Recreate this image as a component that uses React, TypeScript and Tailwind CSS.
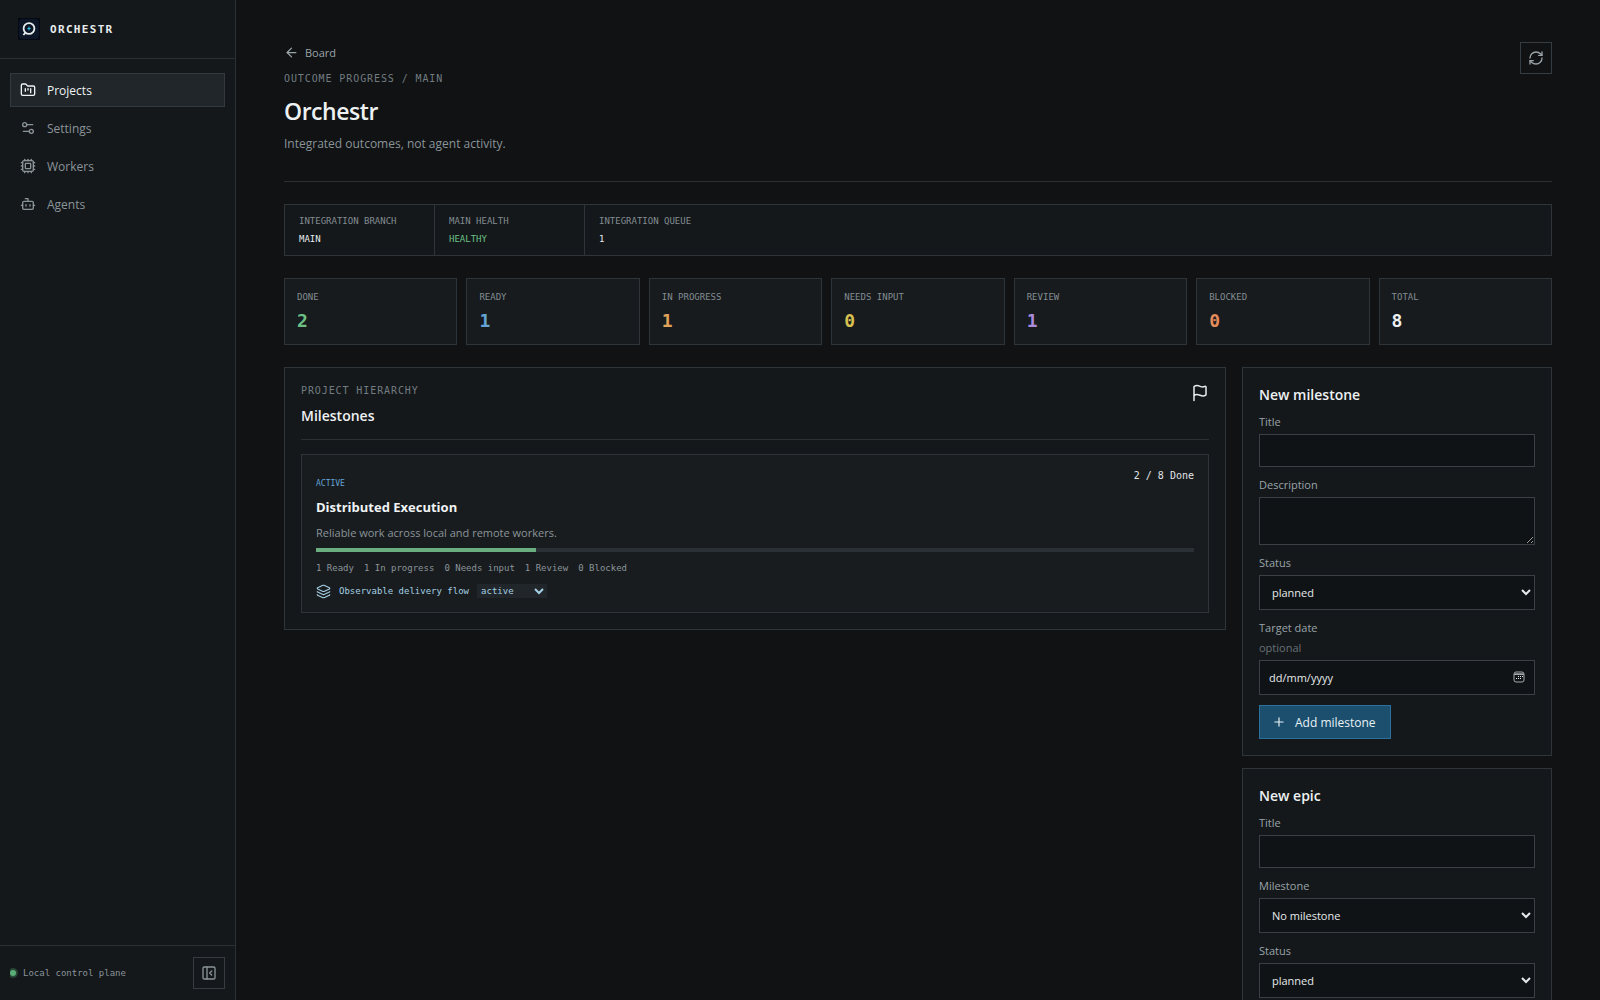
import { useId, type ReactNode } from "react"
import {
  ArrowLeft,
  Bot,
  Cpu,
  Flag,
  FolderKanban,
  Layers,
  PanelLeftClose,
  Plus,
  RefreshCw,
  Settings2,
} from "lucide-react"

const navItems = [
  { label: "Projects", icon: FolderKanban, active: true },
  { label: "Settings", icon: Settings2, active: false },
  { label: "Workers", icon: Cpu, active: false },
  { label: "Agents", icon: Bot, active: false },
]

const health = [
  { label: "Integration branch", value: "main", color: "text-[#e8ecee]" },
  { label: "Main health", value: "healthy", color: "text-[#6cc085]" },
  { label: "Integration queue", value: "1", color: "text-[#e8ecee]" },
]

const stats = [
  { label: "Done", value: 2, color: "text-[#6cc085]" },
  { label: "Ready", value: 1, color: "text-[#64a5d6]" },
  { label: "In progress", value: 1, color: "text-[#e0a458]" },
  { label: "Needs input", value: 0, color: "text-[#d8c04f]" },
  { label: "Review", value: 1, color: "text-[#ab8bdc]" },
  { label: "Blocked", value: 0, color: "text-[#e58b5b]" },
  { label: "Total", value: 8, color: "text-[#eef1f2]" },
]

const milestone = {
  status: "active",
  title: "Distributed Execution",
  description: "Reliable work across local and remote workers.",
  done: 2,
  total: 8,
  counts: ["1 Ready", "1 In progress", "0 Needs input", "1 Review", "0 Blocked"],
  epic: { title: "Observable delivery flow", status: "active" },
}

const statuses = ["planned", "active", "completed"]

const controlClass =
  "w-full border border-[#3a4146] bg-[#0f1315] text-[11px] text-[#e6eaec] outline-none focus:border-[#4a90bd]"

function Logo() {
  return (
    <svg className="size-[22px] shrink-0" viewBox="0 0 22 22" fill="none" aria-hidden="true">
      <rect width="22" height="22" fill="#050914" />
      <rect x="1" y="1" width="20" height="20" rx="4" fill="#0c1626" />
      <circle cx="11" cy="10.5" r="5.4" stroke="#e9edf0" strokeWidth="1.8" />
      <path d="M7.4 14.6 5.4 17" stroke="#e9edf0" strokeWidth="1.8" />
      <path d="M11 8.5v4M9 10.5h4" stroke="#1c7f9c" strokeWidth="1.2" />
      <circle cx="11" cy="10.5" r="1" fill="#35c5e6" />
    </svg>
  )
}

function CalendarIcon() {
  return (
    <svg className="size-3" viewBox="0 0 12 12" fill="none" aria-hidden="true">
      <rect x="1" y="1" width="10" height="10" rx="2" stroke="#a3a8ab" />
      <path d="M1 2.5h10" stroke="#777c7f" />
      <path d="M1 3.5h10" stroke="#a3a8ab" />
      <path d="M5 5.5h1M7 5.5h1M9 5.5h1M3 7.5h1M5 7.5h1M7 7.5h1" stroke="#e6eaec" />
    </svg>
  )
}

function Sidebar() {
  return (
    <aside className="flex w-[236px] shrink-0 flex-col border-r border-[#2a2f33] bg-[#14181b]">
      <div className="flex h-[59px] shrink-0 items-center gap-[10px] border-b border-[#2a2f33] px-[18px]">
        <Logo />
        <span className="pt-[2px] font-[DejaVu_Sans_Mono,monospace] text-[11px] font-bold tracking-[0.12em] text-[#e8ecee]">
          ORCHESTR
        </span>
      </div>

      <nav className="flex flex-1 flex-col gap-1 px-[10px] pt-[14px]">
        {navItems.map(({ label, icon: Icon, active }) => (
          <a
            key={label}
            href="#"
            className={`flex h-[34px] items-center gap-[10px] border px-[9px] text-[12px] ${
              active
                ? "border-[#333a3f] bg-[#20262a] text-[#f0f3f4]"
                : "border-transparent text-[#8b9499]"
            }`}
          >
            <Icon size={16} />
            <span className="pt-[2px] pl-px">{label}</span>
          </a>
        ))}
      </nav>

      <div className="flex items-center justify-between border-t border-[#2a2f33] px-[10px] py-[11px]">
        <div className="flex items-center gap-[7px] overflow-hidden py-1 font-[DejaVu_Sans_Mono,monospace] text-[9px] text-[#8b9499]">
          <span className="size-[6px] rounded-full bg-[#5aae78] ring-2 ring-[#5aae78]/30" />
          <span className="pt-px">Local control plane</span>
        </div>
        <button
          type="button"
          aria-label="Collapse sidebar"
          className="flex size-8 items-center justify-center border border-[#363d42] text-[#8b9499]"
        >
          <PanelLeftClose size={16} />
        </button>
      </div>
    </aside>
  )
}

function Field({ label, hint, children }: { label: string; hint?: string; children: (id: string) => ReactNode }) {
  const id = useId()
  return (
    <div className="flex flex-col gap-[5px]">
      <label htmlFor={id} className="text-[11px] leading-[15px] text-[#9aa3a8]">
        {label}
      </label>
      {hint && <span className="text-[11px] leading-[15px] text-[#697176]">{hint}</span>}
      {children(id)}
    </div>
  )
}

function SelectField({ label, options }: { label: string; options: string[] }) {
  return (
    <Field label={label}>
      {(id) => (
        <select id={id} className={`${controlClass} h-[35px] px-2`}>
          {options.map((option) => (
            <option key={option}>{option}</option>
          ))}
        </select>
      )}
    </Field>
  )
}

function FormPanel({ title, children }: { title: string; children: ReactNode }) {
  return (
    <form className="flex flex-col gap-2 border border-[#2e353a] bg-[#14181b] p-4">
      <h2 className="text-[14px] leading-[22px] font-semibold text-[#eef1f2]">{title}</h2>
      <div className="flex flex-col gap-[10px]">{children}</div>
    </form>
  )
}

function MilestoneCard() {
  const percent = (milestone.done / milestone.total) * 100
  return (
    <article className="border border-[#2e353a] bg-[#181c1f] p-[14px]">
      <div className="flex items-start justify-between">
        <div className="pt-2">
          <p className="font-[DejaVu_Sans_Mono,monospace] text-[8px] leading-[14px] text-[#64a5d6] uppercase">
            {milestone.status}
          </p>
          <h3 className="mt-[6px] text-[13px] leading-5 font-bold text-[#f0f3f4]">{milestone.title}</h3>
          <p className="mt-[7px] text-[11px] leading-[18px] text-[#8b9499]">{milestone.description}</p>
        </div>
        <span className="font-[DejaVu_Sans_Mono,monospace] text-[10px] leading-[14px] text-[#e0e5e7]">
          {milestone.done} / {milestone.total} Done
        </span>
      </div>

      <div className="mt-[6px] h-1 bg-[#2a3035]">
        <div className="h-full bg-[#6aae80]" style={{ width: `${percent}%` }} />
      </div>

      <div className="mt-[10px] flex gap-[10px] font-[DejaVu_Sans_Mono,monospace] text-[9px] leading-3 text-[#8b9499]">
        {milestone.counts.map((count) => (
          <span key={count}>{count}</span>
        ))}
      </div>

      <div className="mt-[10px] flex h-[14px] items-center font-[DejaVu_Sans_Mono,monospace] text-[9px] text-[#a5cfe3]">
        <Layers size={15} strokeWidth={1.8} className="mr-2" />
        <label htmlFor="epic-status" className="pt-px">{milestone.epic.title}</label>
        <select
          id="epic-status"
          defaultValue={milestone.epic.status}
          className="ml-2 h-[14px] w-[70px] bg-[#20262a] outline-none"
        >
          {statuses.map((status) => (
            <option key={status}>{status}</option>
          ))}
        </select>
      </div>
    </article>
  )
}

export default function App() {
  return (
    <div className="flex h-screen overflow-hidden bg-[#101214] font-[Open_Sans,sans-serif] text-[#e8ecee] scheme-dark">
      <Sidebar />

      <main className="min-w-0 flex-1 overflow-y-auto px-12 pt-[42px] pb-12 [scrollbar-width:none]">
        {/* Page header */}
        <header className="flex items-start justify-between border-b border-[#2a2f33] pb-[27px]">
          <div>
            <a href="#" className="flex h-5 items-center gap-[6px] text-[11px] text-[#9aa3a8]">
              <ArrowLeft size={15} />
              <span className="pt-[2px]">Board</span>
            </a>
            <p className="mt-[10px] font-[DejaVu_Sans_Mono,monospace] text-[10px] leading-[13px] tracking-[0.09em] text-[#737c81] uppercase">
              Outcome progress / main
            </p>
            <h1 className="mt-[10px] text-[23px] leading-8 font-semibold tracking-[-0.02em] text-[#eef1f2]">Orchestr</h1>
            <p className="mt-[7px] text-[12px] leading-5 text-[#8b9499]">Integrated outcomes, not agent activity.</p>
          </div>
          <button
            type="button"
            aria-label="Refresh"
            className="flex size-8 items-center justify-center border border-[#363d42] text-[#9aa3a8]"
          >
            <RefreshCw size={16} />
          </button>
        </header>

        {/* Integration health */}
        <dl className="mt-[22px] flex h-[52px] border border-[#2e353a] bg-[#14181b] font-[DejaVu_Sans_Mono,monospace] text-[9px] leading-3 uppercase">
          {health.map((item) => (
            <div key={item.label} className="w-[150px] border-r border-[#2e353a] px-[14px] pt-[10px] last:w-auto last:border-r-0">
              <dt className="text-[#838c91]">{item.label}</dt>
              <dd className={`mt-[6px] ${item.color}`}>{item.value}</dd>
            </div>
          ))}
        </dl>

        {/* Task counters */}
        <dl className="mt-[22px] grid grid-cols-7 gap-[9px] font-[DejaVu_Sans_Mono,monospace]">
          {stats.map((stat) => (
            <div key={stat.label} className="h-[67px] border border-[#2e353a] bg-[#171b1e] px-3 pt-3">
              <dt className="text-[9px] leading-3 text-[#838c91] uppercase">{stat.label}</dt>
              <dd className={`mt-[6px] text-[18px] leading-6 font-bold ${stat.color}`}>{stat.value}</dd>
            </div>
          ))}
        </dl>

        <div className="mt-[22px] grid grid-cols-[minmax(0,1fr)_310px] items-start gap-4">
          <section className="border border-[#2e353a] bg-[#14181b] p-4">
            <div className="mb-[14px] flex items-start justify-between border-b border-[#2a2f33] pb-3">
              <div>
                <p className="font-[DejaVu_Sans_Mono,monospace] text-[10px] leading-[13px] tracking-[0.09em] text-[#737c81] uppercase">
                  Project hierarchy
                </p>
                <h2 className="mt-2 text-[14px] leading-[22px] font-semibold text-[#eef1f2]">Milestones</h2>
              </div>
              <Flag size={18} />
            </div>
            <MilestoneCard />
          </section>

          <div className="flex flex-col gap-3">
            <FormPanel title="New milestone">
              <Field label="Title">{(id) => <input id={id} type="text" className={`${controlClass} h-[33px] px-2`} />}</Field>
              <Field label="Description">
                {(id) => <textarea id={id} className={`${controlClass} h-12 resize-y p-2`} />}
              </Field>
              <SelectField label="Status" options={statuses} />
              <Field label="Target date" hint="optional">
                {(id) => (
                  <div className="relative">
                    <input
                      id={id}
                      type="text"
                      placeholder="dd/mm/yyyy"
                      className={`${controlClass} block h-[35px] pr-8 pl-[9px] placeholder:text-[#e6eaec]`}
                    />
                    <button type="button" aria-label="Pick a date" className="absolute top-[11px] right-[10px]">
                      <CalendarIcon />
                    </button>
                  </div>
                )}
              </Field>
              <button
                type="button"
                className="flex h-[34px] items-center gap-[9px] self-start border border-[#2c719c] bg-[#1b4f6d] px-3 text-[12px] text-[#e8f2f7]"
              >
                <Plus size={14} />
                <span className="pt-px pr-[2px]">Add milestone</span>
              </button>
            </FormPanel>

            <FormPanel title="New epic">
              <Field label="Title">{(id) => <input id={id} type="text" className={`${controlClass} h-[33px] px-2`} />}</Field>
              <SelectField label="Milestone" options={["No milestone", milestone.title]} />
              <SelectField label="Status" options={statuses} />
            </FormPanel>
          </div>
        </div>
      </main>
    </div>
  )
}
